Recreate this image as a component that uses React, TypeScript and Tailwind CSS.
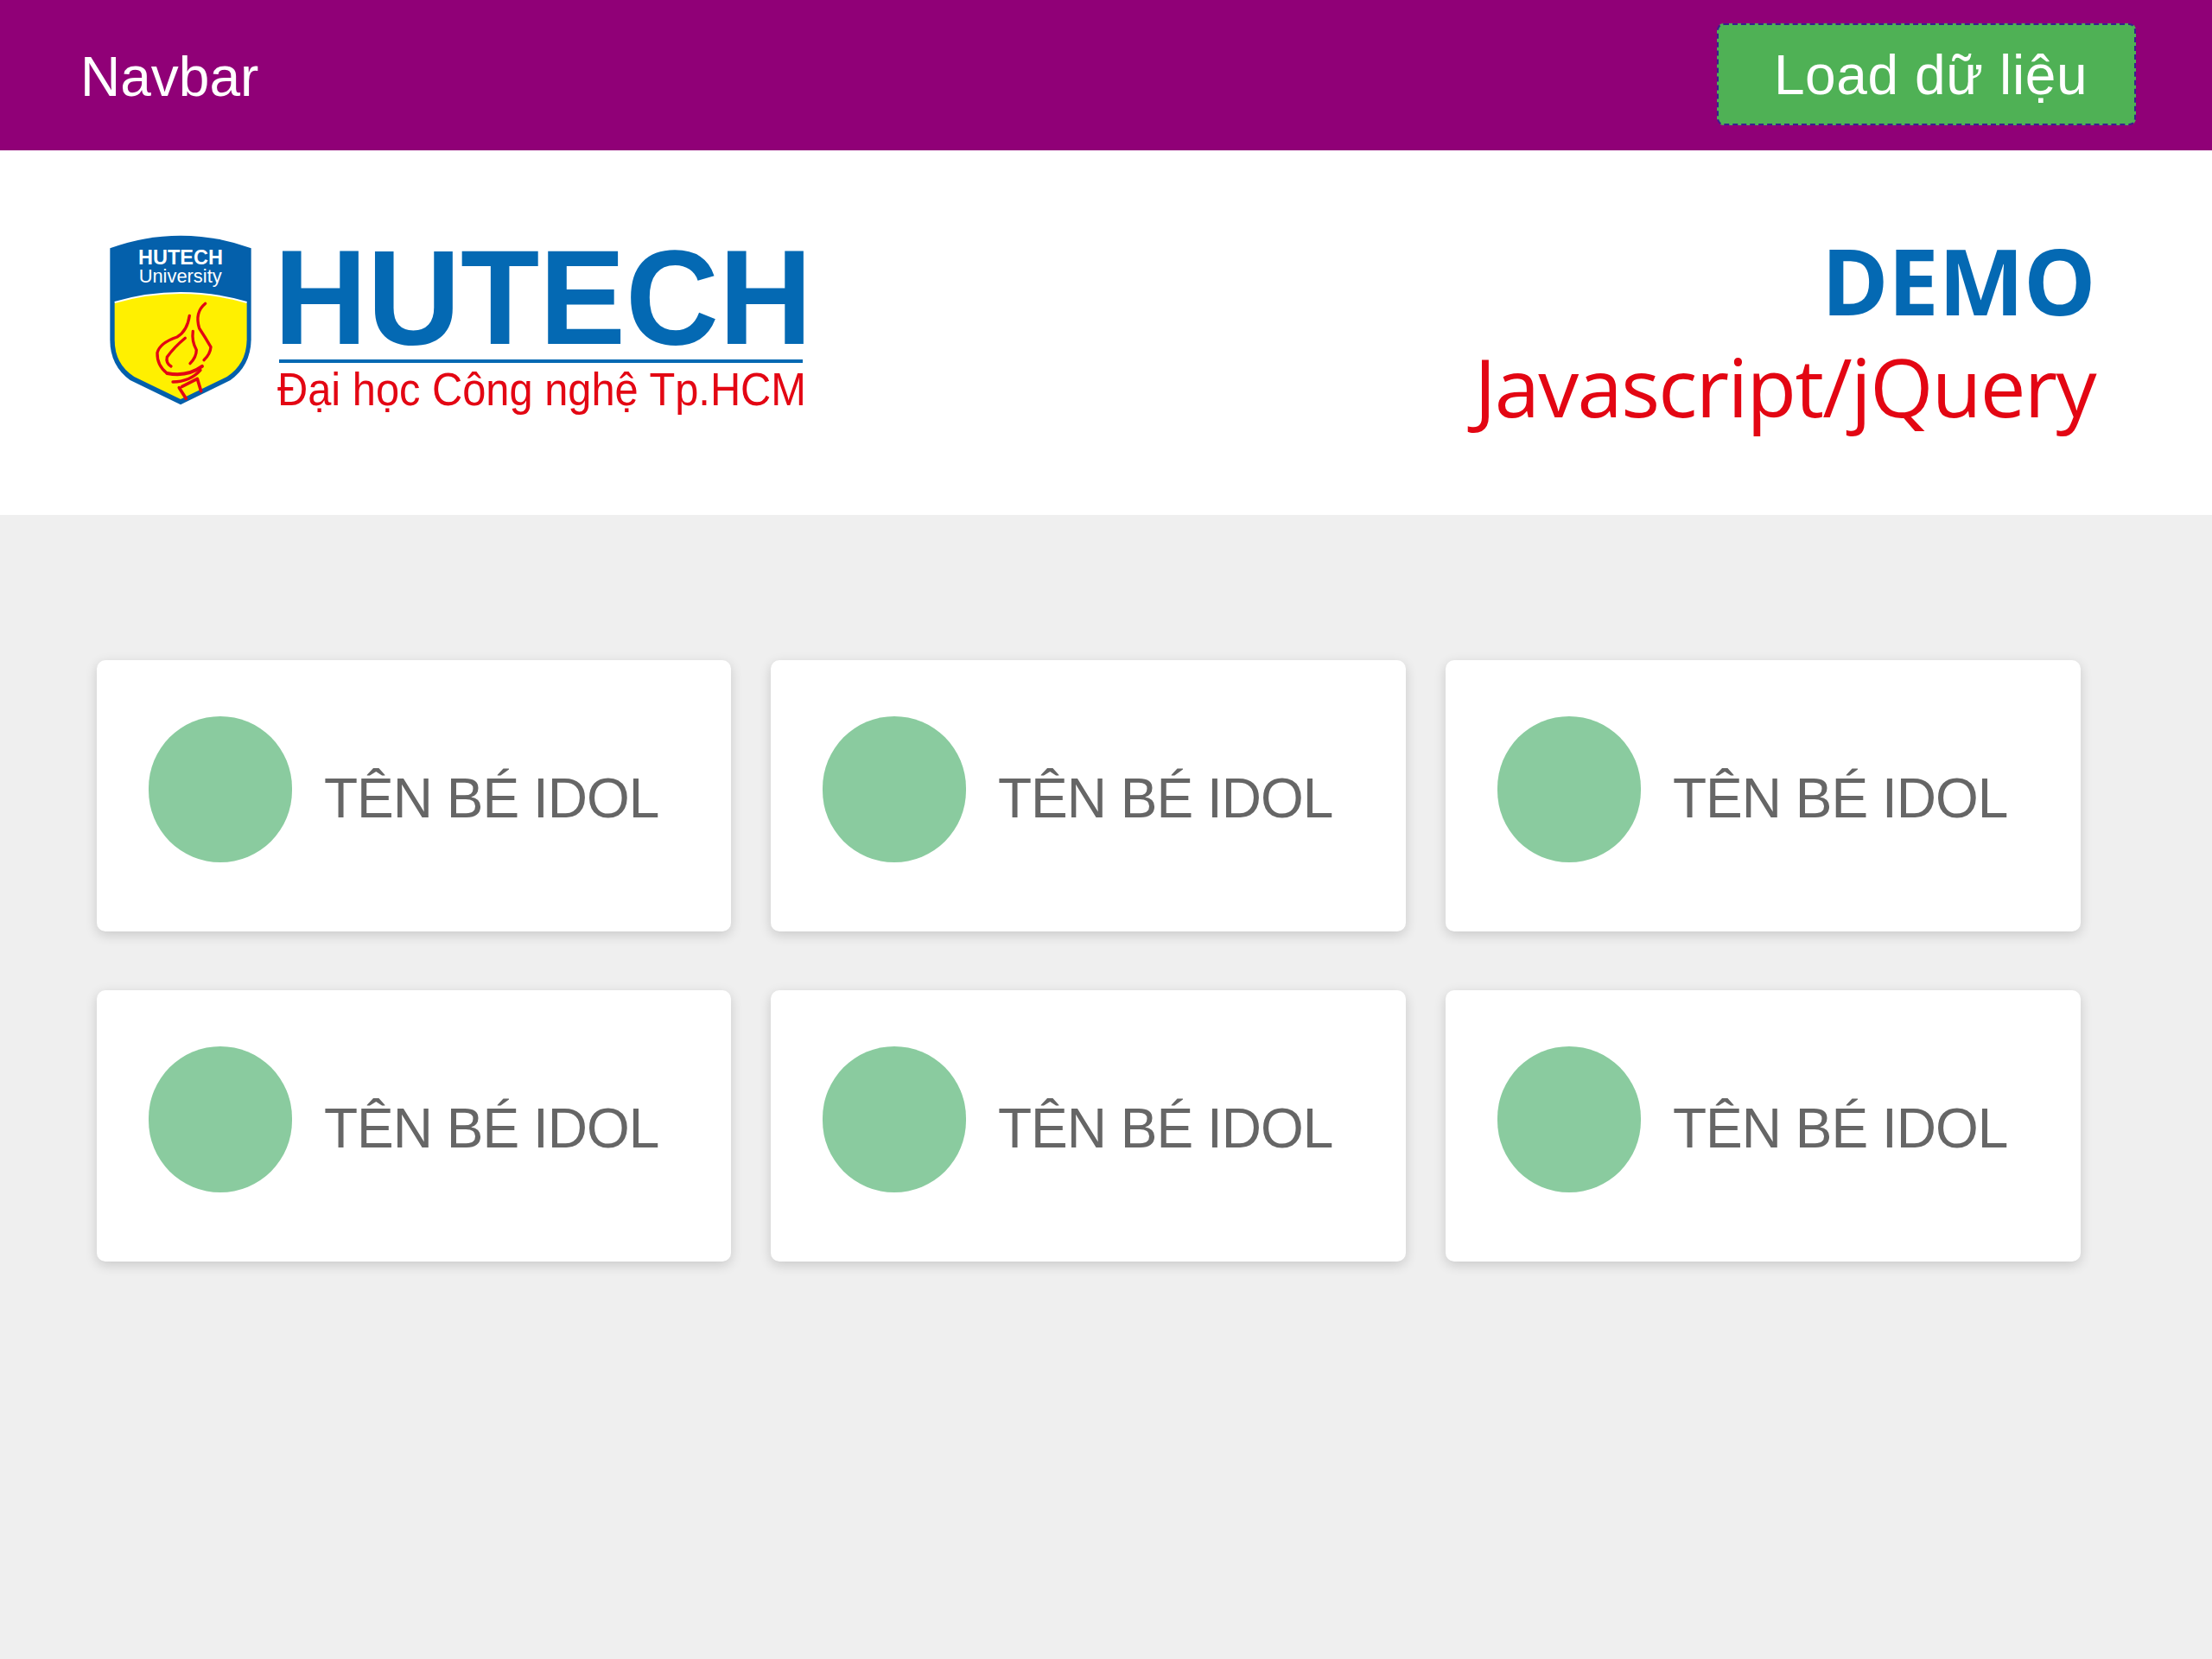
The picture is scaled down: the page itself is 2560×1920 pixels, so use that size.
const idols = [1, 2, 3, 4, 5, 6];

function HutechLogo() {
  return (
    <svg viewBox="110 260 830 240" className="w-[830px] h-[240px] ml-[110px] shrink-0">
      <g transform="translate(110 260) scale(0.3333)">
        <path d="M52 82 Q170 38 297 38 Q425 38 542 82 L542 400 Q540 490 470 540 L297 625 L122 540 Q52 490 52 400 Z" fill="#0460ab" />
        <path d="M68 272 Q180 238 297 238 Q415 238 527 272 L527 400 Q525 485 458 528 L297 606 L136 528 Q68 485 68 400 Z" fill="#fff000" />
        <path d="M68 270 Q180 237 297 237 Q415 237 527 270" fill="none" stroke="#ffffff" strokeWidth="6" />
        <text x="150" y="137" textLength="294" lengthAdjust="spacingAndGlyphs" className="fill-white font-bold text-[70px]">HUTECH</text>
        <text x="152" y="200" textLength="288" lengthAdjust="spacingAndGlyphs" className="fill-white text-[66px]">University</text>
        <g fill="none" stroke="#e30613" strokeWidth="10" strokeLinecap="round">
          <path d="M383 274 Q345 305 362 360 Q385 395 402 425 Q400 450 378 470" />
          <path d="M328 316 Q320 370 285 390 Q225 410 216 445 Q215 490 250 516" />
          <path d="M313 394 Q275 425 250 460 Q245 480 264 492" />
          <path d="M340 370 Q335 405 352 435 Q352 460 330 482" />
          <path d="M250 516 Q320 530 372 492" strokeWidth="12" />
          <path d="M270 546 Q330 545 366 505" strokeWidth="10" />
          <path d="M292 566 L316 604 M302 562 L355 535 M355 535 L368 578" strokeWidth="11" />
        </g>
      </g>
      <text x="317" y="398" textLength="623" lengthAdjust="spacingAndGlyphs" className="fill-[#0469b3] font-bold text-[156px]">HUTECH</text>
      <rect x="323" y="416" width="606" height="4" fill="#0469b3" />
      <text x="321" y="469" textLength="612" lengthAdjust="spacingAndGlyphs" className="fill-[#e30613] text-[53px]">Đại học Công nghệ Tp.HCM</text>
    </svg>
  );
}

function IdolCard() {
  return (
    <div className="h-[314px] bg-white rounded-[10px] shadow-[0_4px_14px_rgba(0,0,0,0.16)] flex items-start pl-[60px] pt-[65px]">
      <div className="w-[166px] h-[169px] rounded-full bg-[#8acb9f] shrink-0" />
      <span className="ml-[37px] mt-[47px] text-[64px] tracking-[-1px] text-[#666666] whitespace-nowrap">TÊN BÉ IDOL</span>
    </div>
  );
}

export default function App() {
  return (
    <div className="min-h-[1920px] bg-[#efefef] font-['Liberation_Sans',sans-serif]">
      <nav className="h-[174px] bg-[#900077] flex items-center justify-between pl-[93px] pr-[88px]">
        <a className="mt-[3px] text-[64px] text-white">Navbar</a>
        <button className="w-[485px] h-[118px] mt-[-2px] pl-[10px] pt-[2px] bg-[#4fb155] border-2 border-dashed border-[#3a1f8f] rounded-[8px] text-[64px] tracking-[0.6px] text-white">
          Load dữ liệu
        </button>
      </nav>

      <header className="h-[422px] bg-white flex items-start justify-between pt-[86px] pr-[135px]">
        <HutechLogo />
        <div className="flex flex-col items-end font-['Open_Sans',sans-serif] mt-[4px]">
          <span className="text-[105px] leading-[122px] font-bold text-[#0469b3] tracking-[-0.5px]">DEMO</span>
          <span className="text-[94px] leading-[122px] text-[#e30613] tracking-[-1.65px]">Javascript/jQuery</span>
        </div>
      </header>

      <main className="grid grid-cols-[734px_735px_735px] gap-x-[46px] gap-y-[68px] pt-[168px] pl-[112px]">
        {idols.map((id) => (
          <IdolCard key={id} />
        ))}
      </main>
    </div>
  );
}
